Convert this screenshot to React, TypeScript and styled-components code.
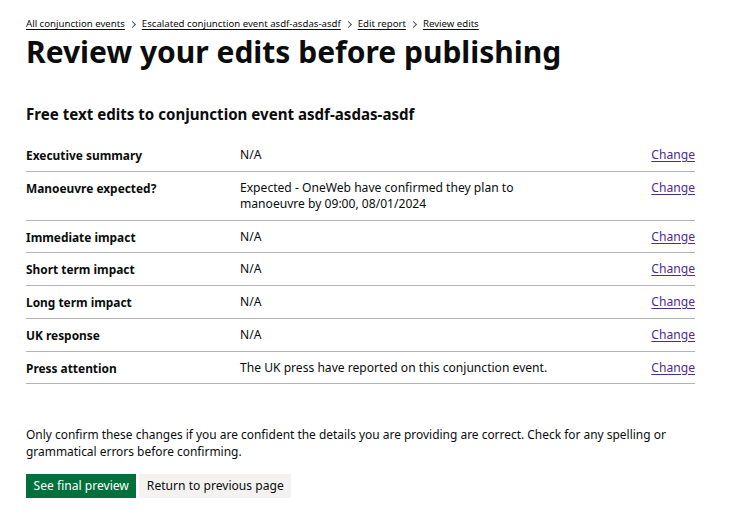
import styled, { createGlobalStyle } from "styled-components";

const GlobalStyle = createGlobalStyle`
  body {
    margin: 0;
    background: #ffffff;
    color: #0b0c0c;
    font-family: "Noto Sans", Arial, sans-serif;
  }
`;

const Page = styled.main`
  padding: 16px 41px 0 26px;
`;

const Breadcrumbs = styled.ol`
  display: flex;
  align-items: center;
  list-style: none;
  margin: 0;
  padding: 0;
  font-size: 9.65px;
  line-height: 16px;
`;

const Crumb = styled.li`
  display: flex;
  align-items: center;
  & + &::before {
    content: "";
    width: 4px;
    height: 4px;
    border-top: 1px solid #505a5f;
    border-right: 1px solid #505a5f;
    transform: rotate(45deg);
    margin: 0 7px 0 5px;
  }
`;

const Link = styled.a`
  color: #0b0c0c;
  text-decoration: underline;
  text-underline-offset: 2px;
`;

const Title = styled.h1`
  margin: 2px 0 0;
  font-size: 30px;
  line-height: 36px;
  font-weight: 700;
`;

const Heading = styled.h2`
  margin: 34px 0 15px;
  font-size: 15.1px;
  line-height: 20px;
  font-weight: 700;
`;

const List = styled.dl`
  margin: 0;
`;

const Row = styled.div`
  display: grid;
  grid-template-columns: 214px 320px 1fr;
  border-bottom: 1px solid #b1b4b6;
  padding: 8px 0 7.75px;
  font-size: 12.1px;
  line-height: 16px;
`;

const Key = styled.dt`
  font-weight: 700;
  font-size: 11.9px;
`;

const Value = styled.dd`
  margin: 0;
`;

const Action = styled.dd`
  margin: 0;
  text-align: right;
  a {
    color: #4c2c92;
    text-underline-offset: 2px;
  }
`;

const Note = styled.p`
  margin: 41.5px 0 14px;
  font-size: 11.95px;
  line-height: 17px;
`;

const Buttons = styled.div`
  display: flex;
  gap: 3px;
`;

const Button = styled.button<{ $secondary?: boolean }>`
  font-family: inherit;
  font-size: 12.1px;
  line-height: 16px;
  padding: 4px 7.5px;
  border: 0;
  border-radius: 0;
  color: ${(p) => (p.$secondary ? "#0b0c0c" : "#ffffff")};
  background: ${(p) => (p.$secondary ? "#f3f2f1" : "#00703c")};
  box-shadow: 0 2px 0 ${(p) => (p.$secondary ? "#929191" : "#002d18")};
`;

const rows = [
  { key: "Executive summary", value: "N/A" },
  {
    key: "Manoeuvre expected?",
    value: "Expected - OneWeb have confirmed they plan to manoeuvre by 09:00, 08/01/2024",
  },
  { key: "Immediate impact", value: "N/A" },
  { key: "Short term impact", value: "N/A" },
  { key: "Long term impact", value: "N/A" },
  { key: "UK response", value: "N/A" },
  { key: "Press attention", value: "The UK press have reported on this conjunction event." },
];

export default function App() {
  return (
    <>
      <GlobalStyle />
      <Page>
        <Breadcrumbs>
          <Crumb><Link href="#">All conjunction events</Link></Crumb>
          <Crumb><Link href="#">Escalated conjunction event asdf-asdas-asdf</Link></Crumb>
          <Crumb><Link href="#">Edit report</Link></Crumb>
          <Crumb><Link href="#">Review edits</Link></Crumb>
        </Breadcrumbs>
        <Title>Review your edits before publishing</Title>
        <Heading>Free text edits to conjunction event asdf-asdas-asdf</Heading>
        <List>
          {rows.map((r) => (
            <Row key={r.key}>
              <Key>{r.key}</Key>
              <Value>{r.value}</Value>
              <Action><a href="#">Change</a></Action>
            </Row>
          ))}
        </List>
        <Note>
          Only confirm these changes if you are confident the details you are providing are correct. Check for any spelling or grammatical errors before confirming.
        </Note>
        <Buttons>
          <Button>See final preview</Button>
          <Button $secondary>Return to previous page</Button>
        </Buttons>
      </Page>
    </>
  );
}
